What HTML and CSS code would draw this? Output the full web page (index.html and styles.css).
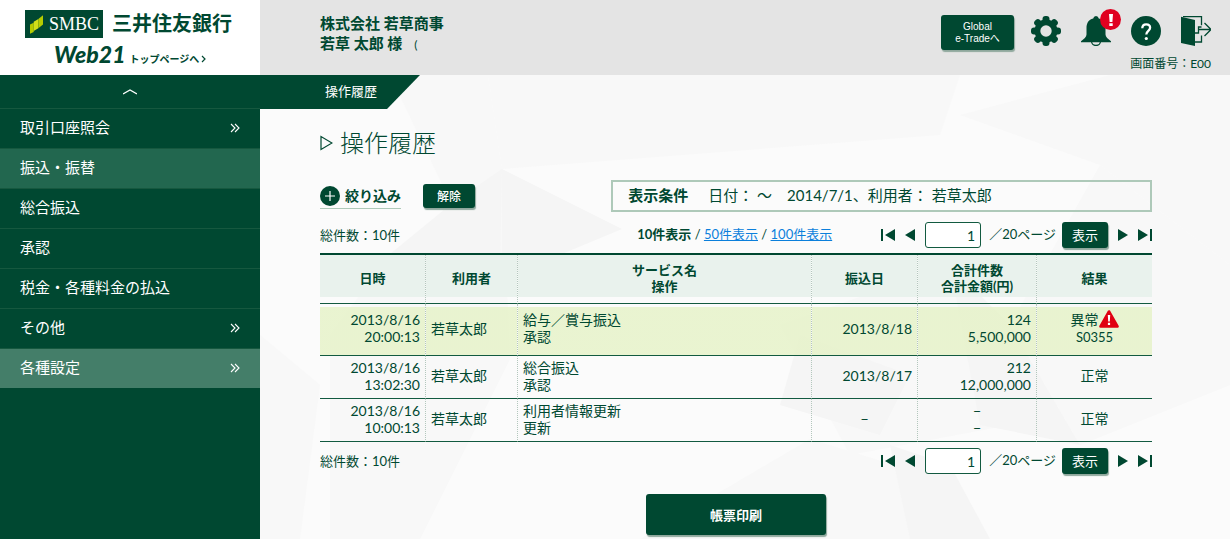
FILE: index.html
```html
<!DOCTYPE html>
<html lang="ja">
<head>
<meta charset="utf-8">
<meta name="viewport" content="width=device-width, initial-scale=1">
<title>操作履歴</title>
<link rel="stylesheet" href="styles.css">
</head>
<body>
<svg class="sprite" aria-hidden="true">
  <symbol id="first" viewBox="0 0 14 12"><path d="M0 0h2v12H0zM14 0v12L4 6z"/></symbol>
  <symbol id="prev" viewBox="0 0 10 12"><path d="M10 0v12L0 6z"/></symbol>
  <symbol id="next" viewBox="0 0 10 12"><path d="M0 0v12l10-6z"/></symbol>
  <symbol id="last" viewBox="0 0 14 12"><path d="M12 0h2v12h-2zM0 0v12l10-6z"/></symbol>
  <symbol id="more" viewBox="0 0 10 10"><path d="M1 1l4 4-4 4M5 1l4 4-4 4" fill="none" stroke="currentColor" stroke-width="1.1"/></symbol>
</svg>
<div class="page">
  <header class="header">
    <div class="brand">
      <div class="bank">
        <span class="smbc">
          <svg class="smbc-mark" viewBox="0 0 14 20"><path d="M0 10l4-2v10l-4 2z" fill="#b5cc00"/><path d="M4 7l5-3v10l-5 3z" fill="#cfdf1a"/><path d="M9 4l5-4v10l-5 4z" fill="#b5cc00"/></svg>
          <span>SMBC</span>
        </span>
        <span class="bank-name">三井住友銀行</span>
      </div>
      <a class="top-link" href="#"><span class="web21">Web21</span><span>トップページへ</span><svg class="top-arrow" viewBox="0 0 5 8"><path d="M1 1l3 3-3 3" fill="none" stroke="currentColor" stroke-width="1.2"/></svg></a>
    </div>
    <div class="account">
      <div>株式会社 若草商事</div>
      <div>若草 太郎 様<span class="paren">(</span></div>
    </div>
    <div class="tools">
      <div class="tool-row">
        <button class="btn trade">Global<br>e-Tradeへ</button>
        <div class="icons">
        <button class="icon" aria-label="設定"><svg viewBox="0 0 30 30"><g fill="#004831"><circle cx="15" cy="15" r="11.5"/><rect x="11.5" y="0" width="7" height="30" rx="3"/><rect x="11.5" y="0" width="7" height="30" rx="3" transform="rotate(45 15 15)"/><rect x="11.5" y="0" width="7" height="30" rx="3" transform="rotate(90 15 15)"/><rect x="11.5" y="0" width="7" height="30" rx="3" transform="rotate(135 15 15)"/></g><circle cx="15" cy="15" r="5.7" fill="#e4e4e4"/></svg></button>
        <button class="icon bell" aria-label="お知らせ"><svg viewBox="0 0 30 30"><circle cx="15" cy="25" r="4.5" fill="#e4e4e4" stroke="#004831" stroke-width="1.3"/><path d="M15 0a3 3 0 0 1 2.8 2.4C22.500 3.500 24.500 7 24.500 12v6.500c0 2.500 2.500 4.300 5.500 6.800v1H0v-1c3-2.500 5.500-4.300 5.500-6.800V12c0-5 2-8.500 6.700-9.600A3 3 0 0 1 15 0z" fill="#004831"/></svg><span class="badge"><svg viewBox="0 0 4 12"><path d="M0 0h4l-.6 8H.6zM.3 9.200h3.400V12H.3z" fill="#fff"/></svg></span></button>
        <button class="icon" aria-label="ヘルプ"><svg viewBox="0 0 30 30"><circle cx="15" cy="15" r="15" fill="#004831"/><path d="M11.300 12.300c0-2.600 1.600-4 3.900-4s3.900 1.400 3.900 3.500c0 3-3.800 3.300-3.800 6.700" fill="none" stroke="#fff" stroke-width="2.300"/><circle cx="15.300" cy="22.500" r="1.600" fill="#fff"/></svg></button>
        <button class="icon" aria-label="ログアウト"><svg viewBox="0 0 30 30"><path d="M0 .8L14 4v26L0 27z" fill="#004831"/><path d="M2 .7h18.500v8.500M20.500 19.500V26H14M14 17h3.500V11h3M23.500 7l6.500 6.500-6.500 6.500M17.500 13.500h12" fill="none" stroke="#004831" stroke-width="1.300"/></svg></button>
        </div>
      </div>
      <div class="screen-no">画面番号：E00</div>
    </div>
  </header>
  <div class="body">
    <nav class="side">
      <button class="collapse" aria-label="メニューを閉じる"><svg viewBox="0 0 14 6"><path d="M0 5l7-4 7 4" fill="none" stroke="currentColor" stroke-width="1.300"/></svg></button>
      <a href="#">取引口座照会<svg class="more"><use href="#more"/></svg></a>
      <a href="#" class="hover">振込・振替</a>
      <a href="#">総合振込</a>
      <a href="#">承認</a>
      <a href="#">税金・各種料金の払込</a>
      <a href="#">その他<svg class="more"><use href="#more"/></svg></a>
      <a href="#" class="current">各種設定<svg class="more"><use href="#more"/></svg></a>
    </nav>
    <main class="main">
      <svg class="facets" viewBox="0 0 970 464" preserveAspectRatio="none" aria-hidden="true">
        <g fill="#f8f8f8"><path d="M130 0h98l14 94-50 36z"/><path d="M228 0h252l220 0-20 60-438 34z"/><path d="M242 94L130 180 70 260v204h90l90-180z"/><path d="M700 40l150-40h120v190l-130-100z"/><path d="M520 250l170-60 60 160-160 30z"/><path d="M840 90l130 100v120l-150 60-70-120z"/><path d="M380 464l170-100 130 40-20 60z"/><path d="M0 260l60 50-20 154H0z"/></g>
        <g fill="#f5f5f5"><path d="M242 94L190 130 80 220l160-20z"/><path d="M242 94v110l120-50z"/><path d="M690 190l60 60 70 120-100-20z"/><path d="M540 260l-20 70 100 30 30-60z"/><path d="M630 370l60 20 40 74h-80z"/></g>
      </svg>
      <div class="tab">操作履歴</div>
      <div class="content">
        <h1 class="title"><svg viewBox="0 0 13 16"><path d="M1 1.500v13L12 8z" fill="none" stroke="currentColor" stroke-width="1.200"/></svg>操作履歴</h1>
        <div class="filter">
          <a class="narrow" href="#"><svg viewBox="0 0 20 20"><circle cx="10" cy="10" r="10" fill="#004831"/><path d="M10 5v10M5 10h10" stroke="#fff" stroke-width="1.200"/></svg>絞り込み</a>
          <button class="btn release">解除</button>
          <div class="condition"><strong>表示条件</strong><span>日付： ～　2014/7/1、利用者： 若草太郎</span></div>
        </div>
        <div class="bar">
          <span class="total">総件数：10件</span>
          <span class="sizes"><strong>10件表示</strong> / <a href="#">50件表示</a> / <a href="#">100件表示</a></span>
          <div class="pager">
            <button class="nav wide" aria-label="最初"><svg><use href="#first"/></svg></button>
            <button class="nav" aria-label="前へ"><svg><use href="#prev"/></svg></button>
            <input type="text" value="1" aria-label="ページ番号">
            <span class="pages">／20ページ</span>
            <button class="btn show">表示</button>
            <button class="nav forward" aria-label="次へ"><svg><use href="#next"/></svg></button>
            <button class="nav wide" aria-label="最後"><svg><use href="#last"/></svg></button>
          </div>
        </div>
        <table class="history">
          <colgroup><col class="c-date"><col class="c-user"><col><col class="c-date"><col class="c-sum"><col class="c-result"></colgroup>
          <thead>
            <tr><th>日時</th><th>利用者</th><th>サービス名<br>操作</th><th>振込日</th><th>合計件数<br>合計金額(円)</th><th>結果</th></tr>
          </thead>
          <tbody>
            <tr class="error"><td class="num">2013/8/16<br>20:00:13</td><td>若草太郎</td><td>給与／賞与振込<br>承認</td><td class="num">2013/8/18</td><td class="num">124<br>5,500,000</td><td class="mid"><span class="alert">異常<svg viewBox="0 0 20 18"><path d="M10 1.500L18.500 16.500h-17z" fill="#e00012" stroke="#e00012" stroke-width="2.600" stroke-linejoin="round"/><path d="M8.800 5h2.400l-.4 6.500H9.200zM8.900 12.800h2.200V15H8.900z" fill="#fff"/></svg></span><br><span class="code">S0355</span></td></tr>
            <tr><td class="num">2013/8/16<br>13:02:30</td><td>若草太郎</td><td>総合振込<br>承認</td><td class="num">2013/8/17</td><td class="num">212<br>12,000,000</td><td class="mid">正常</td></tr>
            <tr><td class="num">2013/8/16<br>10:00:13</td><td>若草太郎</td><td>利用者情報更新<br>更新</td><td class="mid">−</td><td class="mid">−<br>−</td><td class="mid">正常</td></tr>
          </tbody>
        </table>
        <div class="bar bottom">
          <span class="total">総件数：10件</span>
          <div class="pager">
            <button class="nav wide" aria-label="最初"><svg><use href="#first"/></svg></button>
            <button class="nav" aria-label="前へ"><svg><use href="#prev"/></svg></button>
            <input type="text" value="1" aria-label="ページ番号">
            <span class="pages">／20ページ</span>
            <button class="btn show">表示</button>
            <button class="nav forward" aria-label="次へ"><svg><use href="#next"/></svg></button>
            <button class="nav wide" aria-label="最後"><svg><use href="#last"/></svg></button>
          </div>
        </div>
        <button class="btn print">帳票印刷</button>
      </div>
    </main>
  </div>
</div>
</body>
</html>
```

FILE: styles.css
```css
:root {
  --green: #004831;
  --line: #125a40;
}

* { box-sizing: border-box; }

body {
  margin: 0;
  color: var(--green);
  font: 14px/17px Lato, "Noto Sans CJK JP", sans-serif;
}

button, input { font-family: inherit; color: inherit; }
button { border: 0; padding: 0; background: none; cursor: pointer; }
svg { display: block; }
.sprite { display: none; }

.page { display: flex; flex-direction: column; min-height: 100vh; }

.header { display: flex; min-height: 75px; background: #e4e4e4; }

.brand { flex: 0 0 260px; padding: 10px 0 0 25px; background: #fff; }
.bank { display: flex; align-items: center; gap: 9px; }
.smbc {
  display: flex;
  align-items: center;
  gap: 6px;
  width: 78px;
  height: 28px;
  padding-left: 5px;
  background: var(--green);
  color: #fff;
  font: 18px/28px "Liberation Serif", serif;
}
.smbc-mark { width: 13px; height: 19px; }
.bank-name { padding-bottom: 1px; font-size: 20px; line-height: 27px; font-weight: 700; white-space: nowrap; }
.top-link {
  display: flex;
  align-items: baseline;
  padding-left: 29px;
  color: inherit;
  font-size: 10px;
  font-weight: 700;
  line-height: 32px;
  text-decoration: none;
}
.web21 { margin-right: 4px; font-size: 23px; font-weight: 900; font-style: italic; line-height: 32px; }
.top-arrow { width: 5px; height: 8px; margin-left: 2px; }

.account { flex: 1; padding: 13px 0 0 60px; font-size: 15px; font-weight: 700; line-height: 20px; }
.paren { margin-left: 12px; font-size: 12px; font-weight: 400; }

.tools { padding: 15px 19px 0 0; }
.tool-row { display: flex; gap: 17px; align-items: flex-start; }
.icons { display: flex; gap: 20px; }
.icon { position: relative; width: 30px; height: 30px; margin-top: 1px; }
.icon > svg { width: 30px; height: 30px; }
.badge {
  position: absolute;
  top: -7px;
  right: -10px;
  display: grid;
  place-items: center;
  width: 21px;
  height: 21px;
  border-radius: 50%;
  background: #e00020;
}
.badge svg { width: 4px; height: 12px; }
.screen-no { margin-top: 5px; font-size: 12px; line-height: 17px; text-align: right; }

.btn {
  border-radius: 3px;
  background: var(--green);
  box-shadow: 1px 2px 1px #8fa89d;
  color: #fff;
}
.trade { width: 73px; height: 35px; font: 10px/12px "Liberation Sans", "Noto Sans CJK JP", sans-serif; }

.body { flex: 1; display: flex; }

.side { flex: 0 0 260px; background: var(--green); color: #fff; }
.collapse { display: grid; place-items: center; width: 100%; height: 33px; color: #fff; }
.collapse svg { width: 14px; height: 6px; }
.side a {
  display: flex;
  align-items: center;
  justify-content: space-between;
  height: 40px;
  padding: 0 20px 2px;
  border-top: 1px solid #16583f;
  color: #fff;
  font-size: 15px;
  text-decoration: none;
}
.side .hover { background: #22674f; }
.side .current { background: #447e69; }
.more { width: 10px; height: 10px; }

.main { position: relative; flex: 1; min-width: 0; background: #fbfbfb; }
.facets { position: absolute; inset: 0; width: 100%; height: 100%; }
.tab {
  position: relative;
  width: 160px;
  height: 34px;
  padding-left: 65px;
  background: var(--green);
  clip-path: polygon(0 0, 100% 0, 127px 100%, 0 100%);
  color: #fff;
  font-size: 13px;
  line-height: 32px;
}
.content { position: relative; padding: 18px 78px 4px 60px; }

.title {
  display: flex;
  align-items: center;
  gap: 7px;
  margin: 0;
  font-size: 24px;
  font-weight: 300;
  line-height: 32px;
}
.title svg { width: 13px; height: 16px; }

.filter { display: flex; align-items: center; margin-top: 21px; }
.narrow {
  display: flex;
  align-items: center;
  gap: 5px;
  height: 25px;
  border-bottom: 1px solid #aec9b9;
  color: inherit;
  font-weight: 700;
  text-decoration: none;
}
.narrow svg { width: 20px; height: 20px; }
.release { width: 52px; height: 24px; margin-left: 22px; padding-bottom: 2px; font-size: 12px; font-weight: 500; }
.condition {
  display: flex;
  gap: 20px;
  width: 65%;
  margin-left: auto;
  padding: 4px 15px 6px;
  border: 2px solid #aec9b9;
  font-size: 15px;
  line-height: 18px;
}

.bar { display: flex; align-items: center; margin-top: 10px; font-size: 13px; }
.total { flex: 1; }
.sizes { padding-bottom: 2px; }
.sizes a { color: #0b7fdb; }
.pager { display: flex; align-items: center; margin-left: 49px; }
.nav { width: 10px; height: 12px; margin-right: 10px; }
.nav svg { width: 100%; height: 12px; fill: var(--green); }
.wide { width: 14px; }
.wide:last-child { margin-right: 0; }
.forward { margin-left: 10px; }
.pager input {
  width: 56px;
  height: 26px;
  padding: 0 5px;
  border: 1px solid var(--line);
  border-radius: 3px;
  background: #fff;
  font-size: 14px;
  text-align: right;
}
.pages { margin: 0 6px 0 8px; padding-bottom: 2px; }
.show { width: 46px; height: 26px; padding-bottom: 2px; font-size: 13px; }

.history {
  width: 100%;
  margin-top: 5px;
  border-top: 2px solid var(--green);
  border-spacing: 0;
  table-layout: fixed;
}
.c-date { width: 106px; }
.c-user { width: 92px; }
.c-sum { width: 119px; }
.c-result { width: 115px; }
.history th, .history td { border-right: 1px dotted #b3c7bd; border-bottom: 1px solid var(--line); }
.history th:last-child, .history td:last-child { border-right: 0; }
.history th {
  height: 49px;
  padding: 4px 0 6px;
  background: linear-gradient(#e9f2ed, #e9f2ed) top / 100% 42px no-repeat;
  font-size: 13px;
  line-height: 16px;
}
.history td { height: 43px; padding: 0 5px 3px; }
.history .error td {
  height: 52px;
  background: linear-gradient(#e5f2c6cc, #e5f2c6cc) bottom / 100% 48px no-repeat;
}
.history .num { text-align: right; }
.history .mid { text-align: center; }
.alert { display: inline-flex; align-items: center; height: 18px; }
.alert svg { width: 20px; height: 18px; }
.code { font-size: 13px; }

.bottom { margin-top: 6px; }
.print { display: block; width: 180px; height: 41px; margin: 20px auto 0; font-size: 13px; font-weight: 700; }
```
